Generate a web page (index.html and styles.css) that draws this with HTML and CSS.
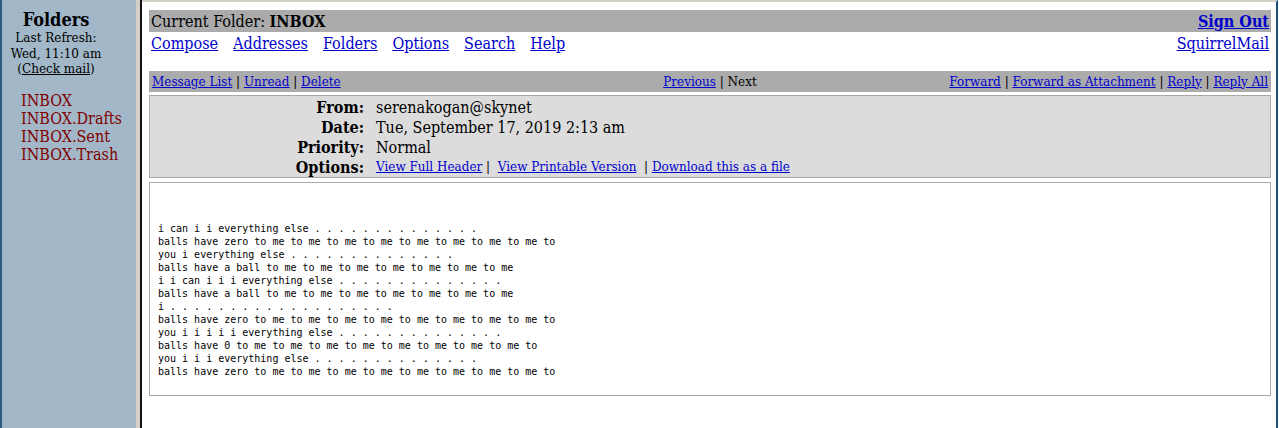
FILE: index.html
```html
<!DOCTYPE html>
<html>
<head>
<meta charset="utf-8">
<title>SquirrelMail - Read message</title>
<link rel="stylesheet" href="styles.css">
</head>
<body>
<div class="app">
  <aside class="left">
    <div class="left-head">
      <div class="folders-title">Folders</div>
      <div class="refresh">Last Refresh:</div>
      <div class="refresh">Wed, 11:10 am</div>
      <div class="refresh">(<a href="#" class="check">Check mail</a>)</div>
    </div>
    <ul class="folder-list">
      <li>INBOX</li>
      <li>INBOX.Drafts</li>
      <li>INBOX.Sent</li>
      <li>INBOX.Trash</li>
    </ul>
  </aside>
  <div class="divider"></div>
  <main class="right">
    <div class="bar top-bar">
      <span>Current Folder: <b>INBOX</b></span>
      <a href="#" class="signout">Sign Out</a>
    </div>
    <div class="nav-row">
      <nav class="nav">
        <a href="#">Compose</a>
        <a href="#">Addresses</a>
        <a href="#">Folders</a>
        <a href="#">Options</a>
        <a href="#">Search</a>
        <a href="#">Help</a>
      </nav>
      <a href="#">SquirrelMail</a>
    </div>
    <div class="bar msg-bar">
      <span class="msg-left"><a href="#">Message List</a> | <a href="#">Unread</a> | <a href="#">Delete</a></span>
      <span class="msg-center"><a href="#">Previous</a> | Next</span>
      <span class="msg-right"><a href="#">Forward</a> | <a href="#">Forward as Attachment</a> | <a href="#">Reply</a> | <a href="#">Reply All</a></span>
    </div>
    <div class="headers">
      <div class="label">From:</div><div class="value">serenakogan@skynet</div>
      <div class="label">Date:</div><div class="value">Tue, September 17, 2019 2:13 am</div>
      <div class="label">Priority:</div><div class="value">Normal</div>
      <div class="label">Options:</div><div class="value small"><a href="#">View Full Header</a> |&nbsp; <a href="#">View Printable Version</a>&nbsp; | <a href="#">Download this as a file</a></div>
    </div>
    <div class="body-box">
<pre class="body-text">i can i i everything else . . . . . . . . . . . . . .
balls have zero to me to me to me to me to me to me to me to me to
you i everything else . . . . . . . . . . . . . .
balls have a ball to me to me to me to me to me to me to me
i i can i i i everything else . . . . . . . . . . . . . .
balls have a ball to me to me to me to me to me to me to me
i . . . . . . . . . . . . . . . . . . .
balls have zero to me to me to me to me to me to me to me to me to
you i i i i i everything else . . . . . . . . . . . . . .
balls have 0 to me to me to me to me to me to me to me to me to
you i i i everything else . . . . . . . . . . . . . .
balls have zero to me to me to me to me to me to me to me to me to</pre>
    </div>
  </main>
</div>
</body>
</html>
```

FILE: styles.css
```css
html, body {
  margin: 0;
  padding: 0;
  background: #ffffff;
}
body {
  font-family: "DejaVu Serif", serif;
  color: #000;
}
a {
  color: #0000cc;
}
.app {
  display: flex;
  height: 428px;
  width: 1279px;
  overflow: hidden;
}
.left {
  width: 134px;
  border-left: 2px solid #2c5a82;
  background: #a2b8c8;
  flex: none;
}
.left-head {
  width: 108px;
  text-align: center;
  padding-top: 9px;
}
.folders-title {
  font-weight: bold;
  font-size: 18px;
  font-stretch: condensed;
  line-height: 22px;
}
.refresh {
  font-size: 12px;
  line-height: 15.5px;
}
.check {
  color: #000;
}
.folder-list {
  list-style: none;
  margin: 14px 0 0 0;
  padding: 0 0 0 19px;
  color: #800000;
  font-size: 16px;
  font-stretch: condensed;
  line-height: 18px;
}
.divider {
  width: 4px;
  flex: none;
  background: #d4d0c8;
  border-right: 2px solid #111;
}
.right {
  flex: 1;
  border-top: 2px solid #d4d0c8;
  border-right: 2px solid #1e4f7a;
  margin-right: 1px;
  padding: 8px 5px 0 7px;
  display: flex;
  flex-direction: column;
}
.bar {
  background: #ababab;
  display: flex;
  align-items: center;
}
.top-bar {
  height: 22px;
  justify-content: space-between;
  padding: 0 2px;
  font-size: 16px;
  font-stretch: condensed;
}
.signout {
  font-weight: bold;
}
.nav-row {
  display: flex;
  justify-content: space-between;
  align-items: center;
  height: 22px;
  padding: 0 2px;
  font-size: 16px;
  font-stretch: condensed;
  margin-bottom: 17px;
}
.nav {
  display: flex;
  gap: 15px;
}
.msg-bar {
  height: 21px;
  padding: 0 3px;
  font-size: 12px;
  justify-content: space-between;
}
.msg-left, .msg-right {
  flex: 1;
}
.msg-right {
  text-align: right;
}
.msg-center {
  flex: none;
}
.headers {
  margin-top: 3px;
  border: 1px solid #a8a8a8;
  background: #dcdcdc;
  display: grid;
  grid-template-columns: 214px 1fr;
  grid-auto-rows: 20px;
  column-gap: 12px;
  padding: 1px 0 0 0;
  height: 80px;
  font-size: 16px;
  font-stretch: condensed;
}
.label {
  font-weight: bold;
  display: flex;
  align-items: center;
  justify-content: flex-end;
}
.value {
  display: flex;
  align-items: center;
  white-space: pre;
}
.value.small {
  font-size: 12px;
  font-stretch: normal;
}
.body-box {
  margin-top: 4px;
  border: 1px solid #a8a8a8;
  height: 212px;
}
.body-text {
  margin: 0;
  padding: 39px 0 0 8px;
  font-family: "DejaVu Sans Mono", monospace;
  font-size: 10px;
  line-height: 13px;
}
```
